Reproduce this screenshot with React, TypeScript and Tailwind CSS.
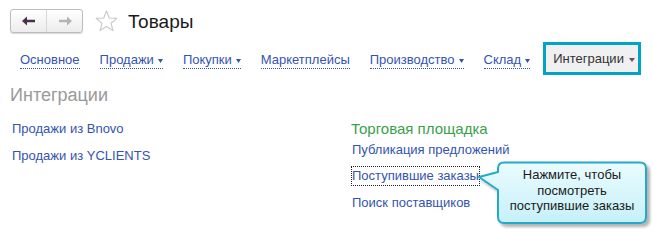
import React from "react";

const Arrow = () => (
  <svg width="5" height="4" viewBox="0 0 5 4" className="ml-[4px] self-center mt-[3px]">
    <path d="M0 0 H5 L2.5 4 Z" fill="currentColor" />
  </svg>
);

function Tab({ label, arrow }: { label: string; arrow?: boolean }) {
  return (
    <div className="flex items-end text-[#3453b2] border-b border-dotted border-[#3453b2] leading-[15px] pb-[1px]">
      <span>{label}</span>
      {arrow && <Arrow />}
    </div>
  );
}

export default function App() {
  return (
    <div
      className="relative w-[653px] h-[242px] bg-white overflow-hidden text-[13px]"
      style={{ fontFamily: '"Liberation Sans", Arial, sans-serif' }}
    >
      {/* header */}
      <div className="flex items-center pt-[8px] pl-[10px] h-[33px]">
        <div className="flex h-[24px] w-[73px] rounded-[3px] border border-[#bdbdbd] bg-gradient-to-b from-white to-[#ececec] shadow-[0_1px_1px_rgba(0,0,0,0.15)]">
          <div className="flex-1 flex items-center justify-center border-r border-[#d6d6d6]">
            <svg width="14" height="10" viewBox="0 0 14 10">
              <path d="M0 5 L5 0.5 V3.8 H13 V6.2 H5 V9.5 Z" fill="#4a2f4a" />
            </svg>
          </div>
          <div className="flex-1 flex items-center justify-center">
            <svg width="14" height="10" viewBox="0 0 14 10">
              <path d="M14 5 L9 0.5 V3.8 H1 V6.2 H9 V9.5 Z" fill="#b3b3b3" />
            </svg>
          </div>
        </div>
        <svg width="23" height="22" viewBox="0 0 24 23" className="ml-[12px]">
          <path
            d="M12 1 L14.9 8.4 L22.8 8.8 L16.7 13.8 L18.8 21.5 L12 17.2 L5.2 21.5 L7.3 13.8 L1.2 8.8 L9.1 8.4 Z"
            fill="none"
            stroke="#c9c9c9"
            strokeWidth="1.2"
            strokeLinejoin="round"
          />
        </svg>
        <div className="ml-[10px] text-[19px] text-[#1a1a1a] leading-none mt-[1px]">Товары</div>
      </div>

      {/* tabs */}
      <div className="flex items-center mt-[9px] pl-[20px] h-[33px]">
        <div className="flex items-center gap-[20px] pt-[4px]">
          <Tab label="Основное" />
          <Tab label="Продажи" arrow />
          <Tab label="Покупки" arrow />
          <Tab label="Маркетплейсы" />
          <Tab label="Производство" arrow />
          <Tab label="Склад" arrow />
        </div>
        <div className="ml-[13px] h-[33px] w-[98px] border-[3px] border-[#00a5c6] bg-[#f0f0f0] flex items-center pl-[7px] text-[#333]">
          <span>Интеграции</span>
          <svg width="6" height="4" viewBox="0 0 6 4" className="ml-[5px] mt-[2px]">
            <path d="M0 0 H6 L3 4 Z" fill="#6b4d5e" />
          </svg>
        </div>
      </div>

      {/* section heading */}
      <div className="pl-[10px] mt-[10px] text-[18px] text-[#9a9a9a] leading-[20px]">Интеграции</div>

      {/* columns */}
      <div className="flex mt-[16px]">
        <div className="w-[340px] pl-[12px] flex flex-col gap-[11px] text-[#3453b2] leading-[16px]">
          <div>Продажи из Bnovo</div>
          <div>Продажи из YCLIENTS</div>
        </div>
        <div className="flex flex-col pl-[11px] leading-[16px]">
          <div className="text-[15px] text-[#3aa04a] leading-[17px] -mt-[1px]">Торговая площадка</div>
          <div className="text-[#3453b2] mt-[5px] pl-[1px]">Публикация предложений</div>
          <div className="mt-[8px] self-start border border-dotted border-[#222] px-[0px] py-[1px] text-[#3453b2]">
            Поступившие заказы
          </div>
          <div className="text-[#3453b2] mt-[9px] pl-[1px]">Поиск поставщиков</div>
        </div>
      </div>

      {/* callout */}
      <div className="absolute left-[476px] top-[159px] w-[176px] h-[70px]">
        <svg width="176" height="70" viewBox="0 0 176 70" className="absolute inset-0">
          <defs>
            <linearGradient id="cg" x1="0" y1="0" x2="0" y2="1">
              <stop offset="0" stopColor="#eafcff" />
              <stop offset="1" stopColor="#c6f0f9" />
            </linearGradient>
            <filter id="sh" x="-10%" y="-10%" width="130%" height="140%">
              <feDropShadow dx="3" dy="3" stdDeviation="1.5" floodColor="#000" floodOpacity="0.3" />
            </filter>
          </defs>
          <path
            d="M28 3.5 H164 Q170 3.5 170 9.5 V58 Q170 64 164 64 H28 Q22 64 22 58 V31 L3 18 L22 13 V9.5 Q22 3.5 28 3.5 Z"
            fill="url(#cg)"
            stroke="#27a9c8"
            strokeWidth="2"
            strokeLinejoin="round"
            filter="url(#sh)"
          />
        </svg>
        <div className="absolute left-[22px] top-[8px] w-[148px] text-center text-[13px] leading-[15.5px] text-[#1a1a1a]">
          Нажмите, чтобы
          <br />
          посмотреть
          <br />
          поступившие заказы
        </div>
      </div>
    </div>
  );
}
